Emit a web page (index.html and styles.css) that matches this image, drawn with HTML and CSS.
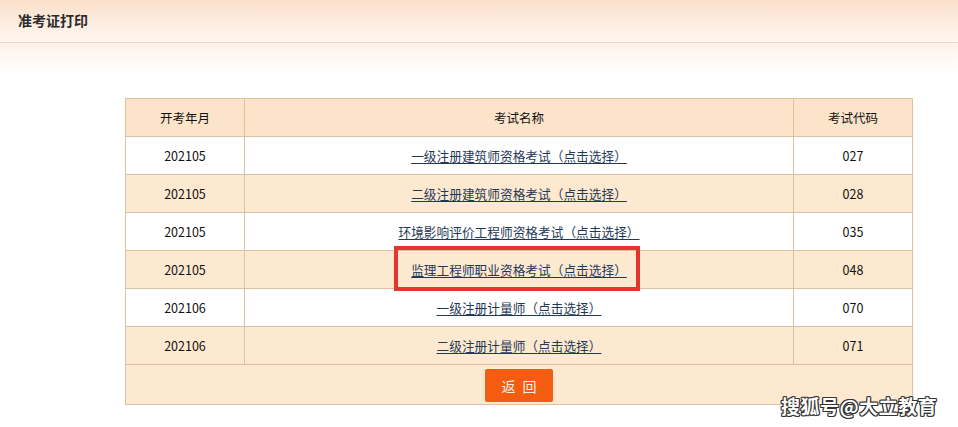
FILE: index.html
```html
<!DOCTYPE html>
<html lang="zh-CN">
<head>
<meta charset="utf-8">
<title>准考证打印</title>
<link rel="stylesheet" href="styles.css">
</head>
<body>
<div class="page">
  <header class="top">
    <h1 class="title">准考证打印</h1>
  </header>
  <div class="fade"></div>
  <main class="content">
    <table class="exam">
      <thead>
        <tr class="alt">
          <th class="c1">开考年月</th>
          <th class="c2">考试名称</th>
          <th class="c3">考试代码</th>
        </tr>
      </thead>
      <tbody>
        <tr><td>202105</td><td><a href="#">一级注册建筑师资格考试（点击选择）</a></td><td>027</td></tr>
        <tr class="alt"><td>202105</td><td><a href="#">二级注册建筑师资格考试（点击选择）</a></td><td>028</td></tr>
        <tr><td>202105</td><td><a href="#">环境影响评价工程师资格考试（点击选择）</a></td><td>035</td></tr>
        <tr class="alt"><td>202105</td><td><span class="hl"><a href="#">监理工程师职业资格考试（点击选择）</a></span></td><td>048</td></tr>
        <tr><td>202106</td><td><a href="#">一级注册计量师（点击选择）</a></td><td>070</td></tr>
        <tr class="alt"><td>202106</td><td><a href="#">二级注册计量师（点击选择）</a></td><td>071</td></tr>
        <tr class="alt last"><td colspan="3"><button class="back" type="button">返 回</button></td></tr>
      </tbody>
    </table>
  </main>
  <div class="mark">搜狐号@大立教育</div>
</div>
</body>
</html>
```
FILE: styles.css
```css
html, body {
  margin: 0;
  padding: 0;
  background: #ffffff;
}
body {
  font-family: "Noto Sans CJK SC", "Noto Sans", sans-serif;
  color: #111;
}
.page {
  position: relative;
  width: 958px;
  height: 427px;
  overflow: hidden;
}
.top {
  height: 42px;
  border-bottom: 1px solid #ecd9cc;
  background: linear-gradient(180deg, #fbdfca 0%, #fdede1 55%, #fff7f0 100%);
  display: flex;
  align-items: center;
  padding-left: 18px;
}
.title {
  margin: 0;
  font-size: 14px;
  font-weight: bold;
  color: #2b2b2b;
  line-height: 1;
  padding-bottom: 3px;
}
.fade {
  height: 30px;
  background: linear-gradient(180deg, #fdf2e9 0%, #ffffff 100%);
}
.content {
  padding: 25px 0 0 125px;
}
.exam {
  width: 788px;
  border-collapse: collapse;
  border: 1px solid #dcc2a4;
  font-size: 12.5px;
  table-layout: fixed;
}
.exam th, .exam td {
  border: 1px solid #dcc2a4;
  height: 37px;
  padding: 0;
  text-align: center;
  font-weight: normal;
  color: #111;
}
.c1 { width: 118px; }
.c3 { width: 118px; }
.exam tr { background: #ffffff; }
.exam tr.alt { background: #fde8d0; }
.exam thead tr.alt { background: #fce4ca; }
.exam a {
  color: #1f3a58;
  font-size: 12.7px;
  text-decoration: underline;
  text-underline-offset: 2px;
}
.exam tr.last td {
  height: 39px;
}
.back {
  width: 68px;
  height: 33px;
  border: none;
  border-radius: 2px;
  background: #f45c12;
  color: #fff3e8;
  font-family: "Noto Sans CJK SC", sans-serif;
  font-size: 14px;
  letter-spacing: 2px;
  padding: 0 0 0 2px;
  margin-top: 2px;
}
.hl {
  position: relative;
  display: inline-block;
}
.hl::after {
  content: "";
  position: absolute;
  left: -17px;
  right: -13px;
  top: -14px;
  bottom: -12px;
  border: 4px solid #e4342e;
}
.mark {
  position: absolute;
  left: 781px;
  top: 392px;
  font-size: 19px;
  font-weight: bold;
  color: #ffffff;
  letter-spacing: 0.5px;
  text-shadow:
    -1px -1px 0 #333, 1px -1px 0 #333, -1px 1px 0 #333, 1px 1px 0 #333,
    0 -1px 0 #333, 0 1px 0 #333, -1px 0 0 #333, 1px 0 0 #333;
}
```
